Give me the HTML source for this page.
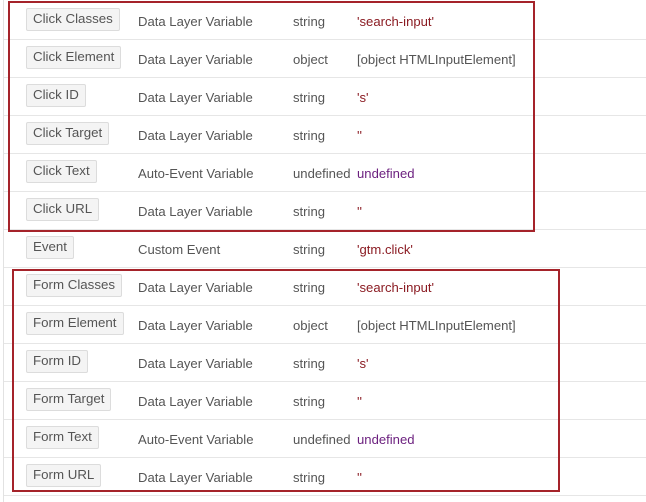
<!DOCTYPE html>
<html><head><meta charset="utf-8"><style>
html,body{margin:0;padding:0;background:#fff;width:646px;height:502px;overflow:hidden;font-family:"Liberation Sans",Arial,sans-serif;}
.vl{position:absolute;left:3px;top:0;width:1px;height:502px;background:#e2e2e2}
.row{position:absolute;left:4px;width:642px;height:37px;border-bottom:1px solid #e6e6e6;font-size:13.1px;color:#555}
.row span{position:absolute;top:1px;line-height:38px;white-space:nowrap}
.b{position:absolute;left:22px;top:6px;height:23px;line-height:20px;padding:0 6px;background:#f4f4f4;border:1px solid #dcdcdc;border-radius:2px;color:#555;font-size:13.3px;box-sizing:border-box}
.c2{left:134px}.c3{left:289px}.c4{left:353px}
.r{color:#8b1c23}.p{color:#6b1f7e}
.box{position:absolute;border:2px solid #a5232a;box-sizing:border-box}
</style></head><body>
<div class="vl"></div>
<div class="row" style="top:2px"><div class="b">Click Classes</div><span class="c2">Data Layer Variable</span><span class="c3">string</span><span class="c4 r">'search-input'</span></div>
<div class="row" style="top:40px"><div class="b">Click Element</div><span class="c2">Data Layer Variable</span><span class="c3">object</span><span class="c4">[object HTMLInputElement]</span></div>
<div class="row" style="top:78px"><div class="b">Click ID</div><span class="c2">Data Layer Variable</span><span class="c3">string</span><span class="c4 r">'s'</span></div>
<div class="row" style="top:116px"><div class="b">Click Target</div><span class="c2">Data Layer Variable</span><span class="c3">string</span><span class="c4 r">''</span></div>
<div class="row" style="top:154px"><div class="b">Click Text</div><span class="c2">Auto-Event Variable</span><span class="c3">undefined</span><span class="c4 p">undefined</span></div>
<div class="row" style="top:192px"><div class="b">Click URL</div><span class="c2">Data Layer Variable</span><span class="c3">string</span><span class="c4 r">''</span></div>
<div class="row" style="top:230px"><div class="b">Event</div><span class="c2">Custom Event</span><span class="c3">string</span><span class="c4 r">'gtm.click'</span></div>
<div class="row" style="top:268px"><div class="b">Form Classes</div><span class="c2">Data Layer Variable</span><span class="c3">string</span><span class="c4 r">'search-input'</span></div>
<div class="row" style="top:306px"><div class="b">Form Element</div><span class="c2">Data Layer Variable</span><span class="c3">object</span><span class="c4">[object HTMLInputElement]</span></div>
<div class="row" style="top:344px"><div class="b">Form ID</div><span class="c2">Data Layer Variable</span><span class="c3">string</span><span class="c4 r">'s'</span></div>
<div class="row" style="top:382px"><div class="b">Form Target</div><span class="c2">Data Layer Variable</span><span class="c3">string</span><span class="c4 r">''</span></div>
<div class="row" style="top:420px"><div class="b">Form Text</div><span class="c2">Auto-Event Variable</span><span class="c3">undefined</span><span class="c4 p">undefined</span></div>
<div class="row" style="top:458px"><div class="b">Form URL</div><span class="c2">Data Layer Variable</span><span class="c3">string</span><span class="c4 r">''</span></div>
<div class="box" style="left:8px;top:1px;width:527px;height:231px"></div>
<div class="box" style="left:12px;top:269px;width:548px;height:223px"></div>
</body></html>
